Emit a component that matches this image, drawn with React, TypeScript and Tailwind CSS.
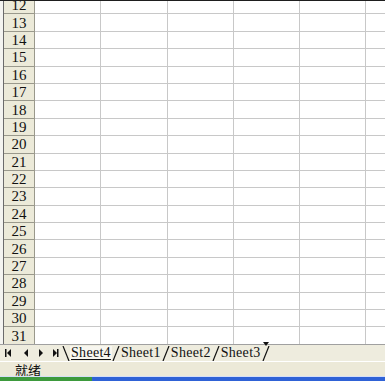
import React from 'react';

const rows = Array.from({ length: 20 }, (_, i) => 12 + i);
const cols = [0, 1, 2, 3, 4, 5];
const tabs = ['Sheet4', 'Sheet1', 'Sheet2', 'Sheet3'];

const Slash: React.FC<{ back?: boolean }> = ({ back }) => (
  <svg width="8" height="15" viewBox="0 0 8 15" className="shrink-0">
    {back ? (
      <line x1="1" y1="0" x2="7" y2="15" stroke="#111" strokeWidth="1.2" />
    ) : (
      <line x1="7" y1="0" x2="1" y2="15" stroke="#111" strokeWidth="1.2" />
    )}
  </svg>
);

const NavArrows: React.FC = () => (
  <svg width="62" height="10" viewBox="0 0 62 10" className="shrink-0">
    <rect x="5" y="1" width="1.5" height="8" fill="#111" />
    <polygon points="11,1 7,5 11,9" fill="#111" />
    <polygon points="28,1 24,5 28,9" fill="#111" />
    <polygon points="39,1 43,5 39,9" fill="#111" />
    <polygon points="53,1 57,5 53,9" fill="#111" />
    <rect x="57" y="1" width="1.5" height="8" fill="#111" />
  </svg>
);

export default function App() {
  return (
    <div className="w-[385px] h-[381px] overflow-hidden bg-[#ece9d8] flex flex-col">
      <div className="h-[1px] bg-[#1e1e1e] shrink-0" />
      <div className="h-[343px] overflow-hidden bg-white flex shrink-0">
        <div className="w-[4px] bg-[#f4f4f0] border-r border-[#6b6b6b] shrink-0" />
        <div className="flex-1 mt-[-4px]">
          {rows.map((r) => (
            <div
              key={r}
              className="grid grid-cols-[31px_66.3px_66.3px_66.3px_66.3px_66.3px_1fr] h-[17.4px]"
            >
              <div className="bg-[#ecead9] border-r border-b border-[#9a998c] flex items-center justify-center text-[15px] leading-none text-[#111] font-['Liberation_Serif',serif] pt-[1px]">
                {r}
              </div>
              {cols.map((c) => (
                <div
                  key={c}
                  className={`border-b border-[#c8c8c8] ${c < 5 ? 'border-r' : ''}`}
                />
              ))}
            </div>
          ))}
        </div>
      </div>
      <div className="relative h-[17px] shrink-0 flex items-center bg-[#eeecde] border-t border-[#a0a0a0]">
        <NavArrows />
        <Slash back />
        <span className="px-[1px] text-[14px] leading-none tracking-[0.3px] text-[#111] font-['Liberation_Serif',serif] underline underline-offset-2 bg-[#f7f6ef]">
          {tabs[0]}
        </span>
        {tabs.slice(1).map((t) => (
          <React.Fragment key={t}>
            <Slash />
            <span className="px-[1px] text-[14px] leading-none tracking-[0.3px] text-[#111] font-['Liberation_Serif',serif]">
              {t}
            </span>
          </React.Fragment>
        ))}
        <Slash />
        <svg
          width="6"
          height="4"
          viewBox="0 0 6 4"
          className="absolute left-[263px] top-[-3px]"
        >
          <polygon points="0,0 6,0 3,4" fill="#111" />
        </svg>
      </div>
      <div className="h-[15px] shrink-0 flex items-center border-t border-white bg-[#ece9d8] pl-[15px]">
        <span className="text-[13px] leading-none text-[#111] font-['Noto_Sans_CJK_SC','Liberation_Sans',sans-serif]">
          就绪
        </span>
      </div>
      <div className="flex-1 flex border-t border-[#d6dff7]">
        <div className="w-[92px] bg-[#3d9a3d]" />
        <div className="flex-1 bg-[#2f62d6]" />
      </div>
    </div>
  );
}
